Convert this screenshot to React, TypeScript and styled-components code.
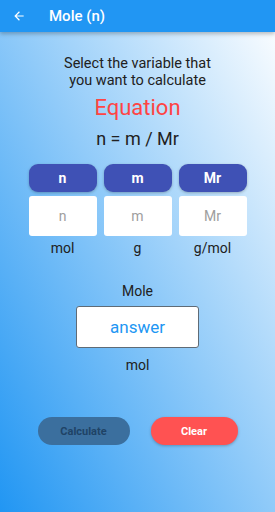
import React from 'react';
import styled, { createGlobalStyle } from 'styled-components';

const GlobalStyle = createGlobalStyle`
  html, body {
    margin: 0;
    padding: 0;
    height: 100%;
  }
  body {
    font-family: Roboto, 'Liberation Sans', sans-serif;
  }
  #root {
    height: 100%;
  }
`;

const variables = [
  { label: 'n', placeholder: 'n', unit: 'mol' },
  { label: 'm', placeholder: 'm', unit: 'g' },
  { label: 'Mr', placeholder: 'Mr', unit: 'g/mol' },
];

const Screen = styled.div`
  width: 275px;
  height: 512px;
  display: flex;
  flex-direction: column;
  overflow: hidden;
  background: linear-gradient(to bottom left, #ffffff 0%, #2196f3 100%);
`;

const AppBar = styled.header`
  height: 32px;
  flex-shrink: 0;
  display: flex;
  align-items: center;
  background: #2196f3;
  color: #fff;
  box-shadow: 0 2px 4px rgba(0, 0, 0, 0.25);
  position: relative;
  z-index: 1;
`;

const BackButton = styled.div`
  width: 36px;
  display: flex;
  justify-content: center;
  padding-left: 1px;
`;

const AppTitle = styled.h1`
  margin: 0 0 0 12px;
  font-size: 15px;
  font-weight: 500;
`;

const Content = styled.main`
  display: flex;
  flex-direction: column;
  align-items: center;
  padding-top: 23px;
  color: #212121;
`;

const Prompt = styled.p`
  margin: 0;
  font-size: 14.5px;
  line-height: 17px;
  text-align: center;
`;

const Equation = styled.h2`
  margin: 5px 0 0;
  font-size: 22px;
  font-weight: 400;
  line-height: 28px;
  color: #ff4444;
`;

const Formula = styled.div`
  margin-top: 5px;
  font-size: 18px;
  line-height: 24px;
`;

const Grid = styled.div`
  margin-top: 13px;
  display: grid;
  grid-template-columns: repeat(3, 68px);
  column-gap: 7px;
`;

const Column = styled.div`
  display: flex;
  flex-direction: column;
  align-items: center;
`;

const VarButton = styled.button`
  width: 68px;
  height: 28px;
  border: none;
  border-radius: 9px;
  background: #3f51b5;
  color: #fff;
  font-family: inherit;
  font-size: 14px;
  font-weight: 700;
  box-shadow: 0 1px 3px rgba(0, 0, 0, 0.25);
`;

const VarInput = styled.input`
  box-sizing: border-box;
  margin-top: 4px;
  width: 68px;
  height: 40px;
  border: none;
  border-radius: 3px;
  background: #fff;
  text-align: center;
  font-family: inherit;
  font-size: 14px;
  outline: none;
  &::placeholder {
    color: #9e9e9e;
  }
`;

const Unit = styled.span`
  margin-top: 4px;
  font-size: 14px;
  line-height: 17px;
`;

const ResultLabel = styled.div`
  margin-top: 26px;
  font-size: 14px;
  line-height: 17px;
`;

const AnswerBox = styled.div`
  box-sizing: border-box;
  margin-top: 6px;
  width: 123px;
  height: 42px;
  border: 1px solid #5f6b76;
  border-radius: 3px;
  background: #fff;
  display: flex;
  align-items: center;
  justify-content: center;
  font-size: 17px;
  color: #2196f3;
`;

const ResultUnit = styled.div`
  margin-top: 9px;
  font-size: 14px;
  line-height: 17px;
`;

const Actions = styled.div`
  margin-top: 43px;
  display: flex;
  gap: 21px;
`;

const ActionButton = styled.button<{ $variant: 'calc' | 'clear' }>`
  height: 28px;
  width: ${(p) => (p.$variant === 'calc' ? '92px' : '87px')};
  border: none;
  border-radius: 14px;
  font-family: inherit;
  font-size: 11px;
  font-weight: 700;
  background: ${(p) => (p.$variant === 'calc' ? '#3b6f9e' : '#ff5252')};
  color: ${(p) => (p.$variant === 'calc' ? '#1f4366' : '#ffffff')};
  box-shadow: ${(p) =>
    p.$variant === 'calc' ? 'none' : '0 1px 3px rgba(0, 0, 0, 0.25)'};
`;

const App = () => {
  return (
    <>
      <GlobalStyle />
      <Screen>
        <AppBar>
          <BackButton>
            <svg width="14" height="14" viewBox="0 0 24 24">
              <path
                fill="#fff"
                d="M20 11H7.83l5.59-5.59L12 4l-8 8 8 8 1.41-1.41L7.83 13H20v-2z"
              />
            </svg>
          </BackButton>
          <AppTitle>Mole (n)</AppTitle>
        </AppBar>
        <Content>
          <Prompt>
            Select the variable that
            <br />
            you want to calculate
          </Prompt>
          <Equation>Equation</Equation>
          <Formula>n = m / Mr</Formula>
          <Grid>
            {variables.map((v) => (
              <Column key={v.label}>
                <VarButton>{v.label}</VarButton>
                <VarInput placeholder={v.placeholder} />
                <Unit>{v.unit}</Unit>
              </Column>
            ))}
          </Grid>
          <ResultLabel>Mole</ResultLabel>
          <AnswerBox>answer</AnswerBox>
          <ResultUnit>mol</ResultUnit>
          <Actions>
            <ActionButton $variant="calc">Calculate</ActionButton>
            <ActionButton $variant="clear">Clear</ActionButton>
          </Actions>
        </Content>
      </Screen>
    </>
  );
};

export default App;
